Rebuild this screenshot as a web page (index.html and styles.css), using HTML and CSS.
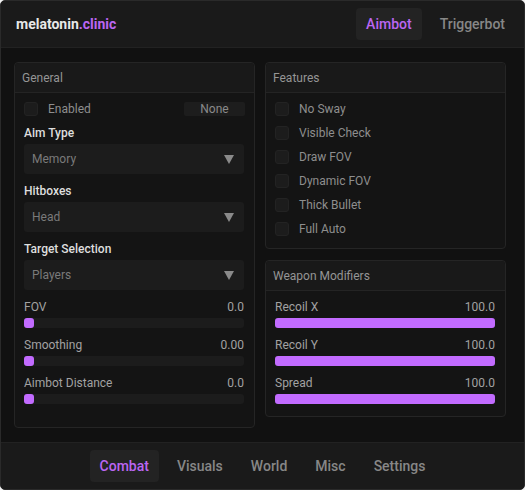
FILE: index.html
```html
<!DOCTYPE html>
<html lang="en">
<head>
    <meta charset="UTF-8">
    <meta name="viewport" content="width=device-width, initial-scale=1.0">
    <title>melatonin.clinic</title>
    <link rel="stylesheet" href="styles.css">
</head>
<body>
    <div class="window">
        <div class="topbar">
            <div class="brand">melatonin<span class="accent">.clinic</span></div>
            <div class="tabs">
                <div class="tab active">Aimbot</div>
                <div class="tab">Triggerbot</div>
            </div>
        </div>

        <div class="content">
            <div class="panel panel-tall">
                <div class="panel-title">General</div>
                <div class="panel-body">
                    <div class="check-row">
                        <span class="check"></span>
                        <span class="check-label">Enabled</span>
                        <span class="keybind">None</span>
                    </div>

                    <div class="field">
                        <div class="field-label">Aim Type</div>
                        <div class="select">
                            <span>Memory</span>
                            <svg class="arrow" width="10" height="9" viewBox="0 0 10 9"><path d="M0 0H10L5 9Z" fill="#8a8a8a"/></svg>
                        </div>
                    </div>

                    <div class="field">
                        <div class="field-label">Hitboxes</div>
                        <div class="select">
                            <span>Head</span>
                            <svg class="arrow" width="10" height="9" viewBox="0 0 10 9"><path d="M0 0H10L5 9Z" fill="#8a8a8a"/></svg>
                        </div>
                    </div>

                    <div class="field">
                        <div class="field-label">Target Selection</div>
                        <div class="select">
                            <span>Players</span>
                            <svg class="arrow" width="10" height="9" viewBox="0 0 10 9"><path d="M0 0H10L5 9Z" fill="#8a8a8a"/></svg>
                        </div>
                    </div>

                    <div class="field">
                        <div class="slider-head"><span>FOV</span><span>0.0</span></div>
                        <div class="track"><div class="fill" style="width: 10px"></div></div>
                    </div>

                    <div class="field">
                        <div class="slider-head"><span>Smoothing</span><span>0.00</span></div>
                        <div class="track"><div class="fill" style="width: 10px"></div></div>
                    </div>

                    <div class="field">
                        <div class="slider-head"><span>Aimbot Distance</span><span>0.0</span></div>
                        <div class="track"><div class="fill" style="width: 10px"></div></div>
                    </div>
                </div>
            </div>

            <div class="column">
                <div class="panel">
                    <div class="panel-title">Features</div>
                    <div class="panel-body">
                        <div class="check-row"><span class="check"></span><span class="check-label">No Sway</span></div>
                        <div class="check-row"><span class="check"></span><span class="check-label">Visible Check</span></div>
                        <div class="check-row"><span class="check"></span><span class="check-label">Draw FOV</span></div>
                        <div class="check-row"><span class="check"></span><span class="check-label">Dynamic FOV</span></div>
                        <div class="check-row"><span class="check"></span><span class="check-label">Thick Bullet</span></div>
                        <div class="check-row"><span class="check"></span><span class="check-label">Full Auto</span></div>
                    </div>
                </div>

                <div class="panel">
                    <div class="panel-title">Weapon Modifiers</div>
                    <div class="panel-body">
                        <div class="field">
                            <div class="slider-head"><span>Recoil X</span><span>100.0</span></div>
                            <div class="track"><div class="fill" style="width: 100%"></div></div>
                        </div>
                        <div class="field">
                            <div class="slider-head"><span>Recoil Y</span><span>100.0</span></div>
                            <div class="track"><div class="fill" style="width: 100%"></div></div>
                        </div>
                        <div class="field">
                            <div class="slider-head"><span>Spread</span><span>100.0</span></div>
                            <div class="track"><div class="fill" style="width: 100%"></div></div>
                        </div>
                    </div>
                </div>
            </div>
        </div>

        <div class="bottombar">
            <div class="tab active">Combat</div>
            <div class="tab">Visuals</div>
            <div class="tab">World</div>
            <div class="tab">Misc</div>
            <div class="tab">Settings</div>
        </div>
    </div>
</body>
</html>
```

FILE: styles.css
```css
* {
    box-sizing: border-box;
}

body {
    margin: 0;
    background: #f2f2f2;
    font-family: Roboto, "Liberation Sans", sans-serif;
}

.window {
    width: 525px;
    height: 490px;
    background: #111111;
    border: 1px solid #2a2a2a;
    border-radius: 5px;
    overflow: hidden;
    display: flex;
    flex-direction: column;
}

.topbar {
    height: 47px;
    flex-shrink: 0;
    background: #1a1a1a;
    border-bottom: 1px solid #222;
    display: flex;
    align-items: center;
    justify-content: space-between;
    padding: 0 9px 0 15px;
}

.brand {
    font-size: 14px;
    font-weight: 700;
    color: #e8e8e8;
}

.accent {
    color: #bb66f2;
}

.tabs {
    display: flex;
    gap: 8px;
}

.tab {
    height: 32px;
    padding: 0 10px;
    display: flex;
    align-items: center;
    font-size: 14px;
    font-weight: 500;
    color: #878787;
    border-radius: 4px;
}

.tab.active {
    background: #232323;
    color: #bb66f2;
}

.content {
    flex: 1;
    display: grid;
    grid-template-columns: 241px 241px;
    gap: 10px;
    padding: 14px 0 14px 13px;
    align-items: start;
}

.column {
    display: flex;
    flex-direction: column;
    gap: 11px;
}

.panel {
    background: #141414;
    border: 1px solid #252525;
    border-radius: 4px;
}

.panel-tall {
    align-self: stretch;
}

.panel-title {
    height: 30px;
    padding: 0 7px;
    display: flex;
    align-items: center;
    background: #191919;
    border-bottom: 1px solid #242424;
    border-radius: 4px 4px 0 0;
    font-size: 12px;
    color: #959595;
}

.panel-body {
    padding: 9px 10px 12px 9px;
    display: flex;
    flex-direction: column;
    gap: 10px;
}

.check-row {
    height: 14px;
    display: flex;
    align-items: center;
    gap: 10px;
}

.check {
    width: 14px;
    height: 14px;
    flex-shrink: 0;
    background: #1c1c1c;
    border: 1px solid #232323;
    border-radius: 3px;
}

.check-label {
    font-size: 12px;
    color: #8e8e8e;
}

.keybind {
    margin-left: auto;
    width: 61px;
    height: 14px;
    margin-right: -1px;
    background: #1d1d1d;
    border-radius: 2px;
    font-size: 12px;
    line-height: 14px;
    text-align: center;
    color: #8a8a8a;
}

.field {
    display: flex;
    flex-direction: column;
    gap: 4px;
}

.field-label {
    height: 14px;
    line-height: 14px;
    font-size: 12px;
    font-weight: 500;
    color: #dedede;
}

.select {
    height: 30px;
    background: #1c1c1c;
    border-radius: 3px;
    display: flex;
    align-items: center;
    justify-content: space-between;
    padding: 0 10px 0 8px;
    font-size: 12px;
    color: #7a7a7a;
}

.slider-head {
    height: 14px;
    line-height: 14px;
    display: flex;
    justify-content: space-between;
    font-size: 12px;
    color: #a2a2a2;
}

.track {
    height: 10px;
    background: #1c1c1c;
    border-radius: 3px;
}

.fill {
    height: 10px;
    background: #c26bff;
    border-radius: 3px;
}

.bottombar {
    height: 47px;
    flex-shrink: 0;
    background: #1a1a1a;
    border-top: 1px solid #222;
    display: flex;
    align-items: center;
    justify-content: center;
    gap: 8px;
}
```
